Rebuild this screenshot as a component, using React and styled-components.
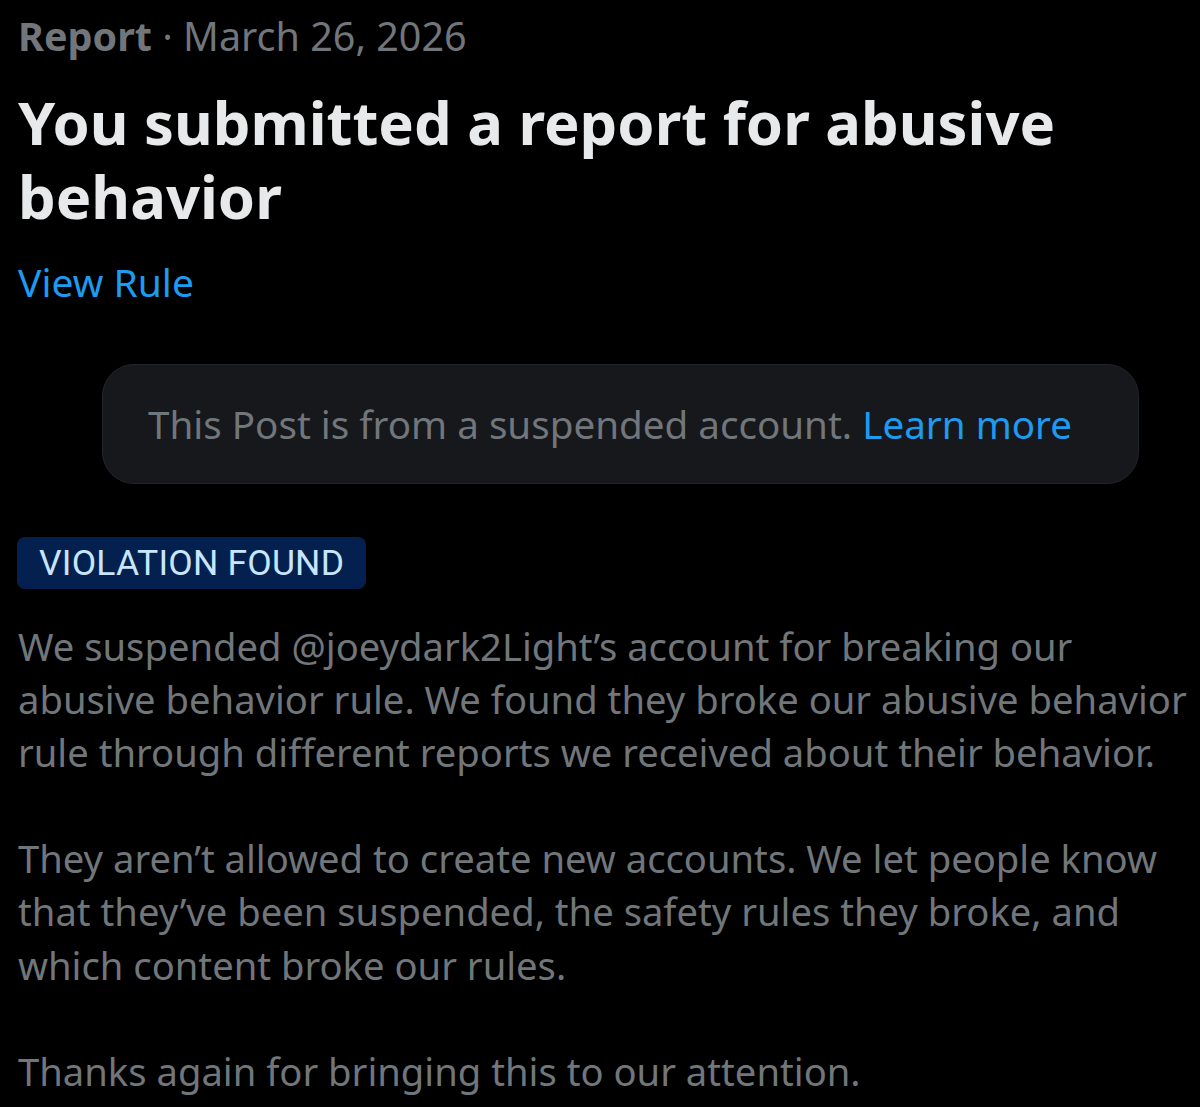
import React from "react";
import styled, { createGlobalStyle } from "styled-components";

const Global = createGlobalStyle`
  html, body { margin: 0; padding: 0; background: #000; }
  body { font-family: "Noto Sans", "DejaVu Sans", sans-serif; -webkit-font-smoothing: antialiased; }
`;

const Page = styled.div`
  width: 1200px;
  min-height: 1107px;
  overflow: hidden;
  background: #000;
  padding: 14px 0 0 18px;
  box-sizing: border-box;
  display: flex;
  flex-direction: column;
  align-items: flex-start;
  & > * { flex-shrink: 0; }
`;

const Meta = styled.div`
  font-size: 39.5px;
  line-height: 44px;
  color: #71767b;
  white-space: nowrap;
`;

const Strong = styled.span`
  font-weight: 700;
`;

const Title = styled.h1`
  margin: 27px 0 0;
  font-size: 59.7px;
  line-height: 74px;
  font-weight: 700;
  color: #e7e9ea;
  white-space: nowrap;
`;

const Link = styled.a`
  color: #1d9bf0;
  text-decoration: none;
  cursor: pointer;
`;

const RuleLink = styled(Link)`
  margin-top: 27px;
  font-size: 39px;
  line-height: 44px;
`;

const Notice = styled.div`
  margin: 60px 0 0 84px;
  width: 1037px;
  height: 120px;
  box-sizing: border-box;
  border-radius: 32px;
  background: #16181c;
  border: 1px solid #22252a;
  display: flex;
  align-items: center;
  padding-left: 45px;
  font-size: 38.6px;
  color: #71767b;
  white-space: nowrap;
`;

const Badge = styled.div`
  margin-top: 53px;
  margin-left: -1px;
  height: 52px;
  box-sizing: border-box;
  padding: 0 22px;
  display: flex;
  align-items: center;
  border-radius: 8px;
  background: #04204f;
  color: #c8e6fb;
  font-family: "Roboto", "Liberation Sans", sans-serif;
  font-size: 35.5px;
  letter-spacing: 0.2px;
`;

const Body = styled.div`
  margin-top: 31px;
  font-size: 38.2px;
  line-height: 53.1px;
  color: #71767b;
  white-space: nowrap;
`;

const Para = styled.p`
  margin: 0 0 53.1px;
`;

export default function App() {
  return (
    <>
      <Global />
      <Page>
        <Meta>
          <Strong>Report</Strong> · March 26, 2026
        </Meta>
        <Title>
          You submitted a report for abusive
          <br />
          behavior
        </Title>
        <RuleLink>View Rule</RuleLink>
        <Notice>
          This Post is from a suspended account.&nbsp;<Link>Learn more</Link>
        </Notice>
        <Badge>VIOLATION FOUND</Badge>
        <Body>
          <Para>
            We suspended @joeydark2Light’s account for breaking our
            <br />
            abusive behavior rule. We found they broke our abusive behavior
            <br />
            rule through different reports we received about their behavior.
          </Para>
          <Para>
            They aren’t allowed to create new accounts. We let people know
            <br />
            that they’ve been suspended, the safety rules they broke, and
            <br />
            which content broke our rules.
          </Para>
          <Para>Thanks again for bringing this to our attention.</Para>
        </Body>
      </Page>
    </>
  );
}
